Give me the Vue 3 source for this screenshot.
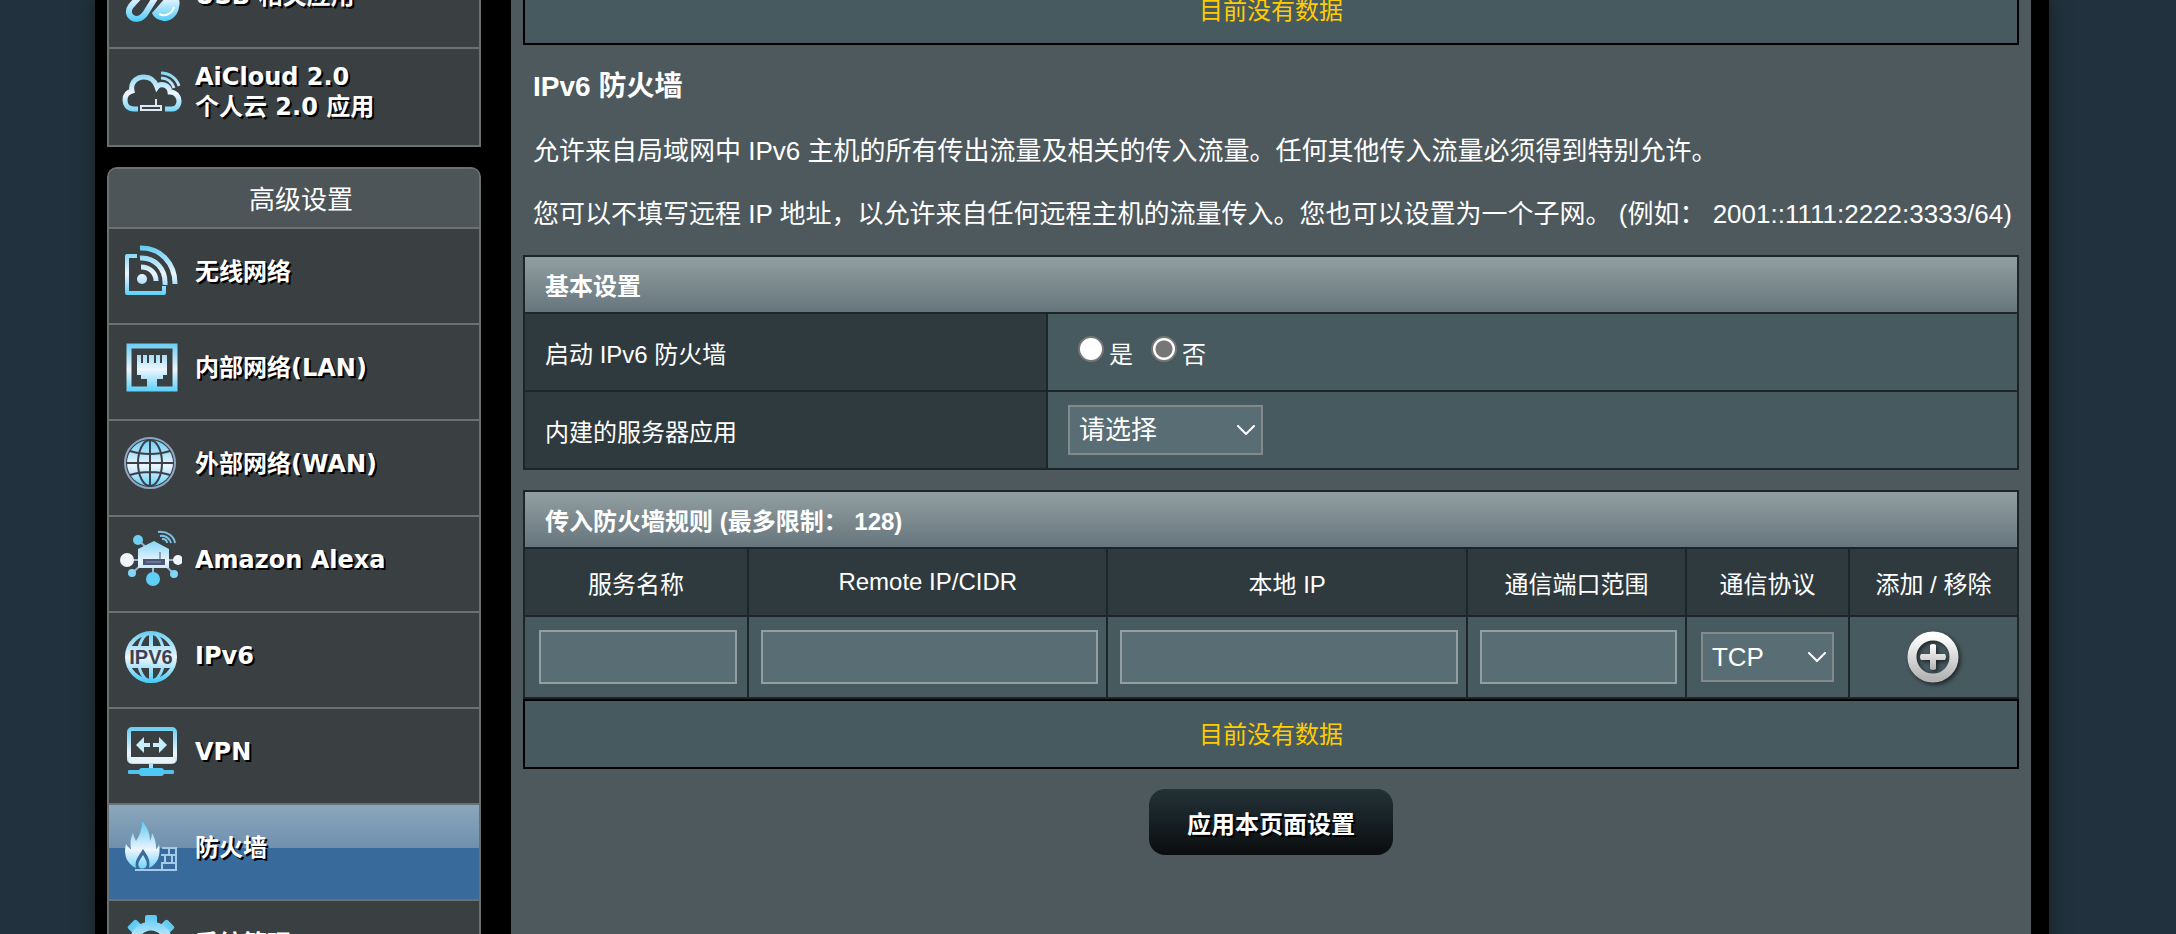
<script setup>
import { ref } from 'vue'

const generalItems = [
  { icon: 'usb', lines: ['USB 相关应用'] },
  { icon: 'cloud', lines: ['AiCloud 2.0', '个人云 2.0 应用'] },
]
const advancedItems = [
  { icon: 'wireless', lines: ['无线网络'] },
  { icon: 'lan', lines: ['内部网络(LAN)'] },
  { icon: 'wan', lines: ['外部网络(WAN)'] },
  { icon: 'alexa', lines: ['Amazon Alexa'] },
  { icon: 'ipv6', lines: ['IPv6'] },
  { icon: 'vpn', lines: ['VPN'] },
  { icon: 'firewall', lines: ['防火墙'], active: true },
  { icon: 'admin', lines: ['系统管理'] },
]
const groups = [
  { title: '', items: generalItems },
  { title: '高级设置', items: advancedItems },
]

const enabled = ref('no')
const service = ref('')
const protocol = ref('TCP')
const gearTeeth = [0, 45, 90, 135, 180, 225, 270, 315]
</script>

<template>
  <div class="page">
    <svg class="defs" aria-hidden="true">
      <defs>
        <linearGradient id="ice" gradientUnits="userSpaceOnUse" x1="0" y1="6" x2="0" y2="58">
          <stop offset="0" stop-color="#5ccaf2" />
          <stop offset="0.55" stop-color="#eef5fd" />
          <stop offset="1" stop-color="#4fcdf8" />
        </linearGradient>
        <linearGradient id="silver" x1="0" y1="0" x2="0" y2="1">
          <stop offset="0" stop-color="#ffffff" />
          <stop offset="1" stop-color="#b4b4b4" />
        </linearGradient>
      </defs>
    </svg>

    <div class="frame">
      <nav class="sidebar">
        <section v-for="group in groups" :key="group.title" class="group" :class="{ titled: group.title }">
          <h2 v-if="group.title" class="group-title">{{ group.title }}</h2>
          <a
            v-for="item in group.items"
            :key="item.icon"
            href="#"
            class="item"
            :class="{ active: item.active }"
          >
            <svg class="icon" viewBox="0 0 64 64" fill="none" stroke-linecap="butt" aria-hidden="true">
              <g v-if="item.icon === 'usb'" stroke="url(#ice)">
                <path d="M13 43 L30 24 C35 18 44 26 39 32 L27 51 C18 62 6 52 13 43 Z" stroke-width="6" />
                <path d="M34 50 L48 34 C55 28 64 34 61 44 C60 54 50 61 42 57 C38 56 35 53 34 50 Z" fill="url(#ice)" stroke="none" />
                <path d="M41 51 C47 54 54 51 56 44" stroke="#ffffff" stroke-width="2" />
              </g>
              <g v-else-if="item.icon === 'cloud'" stroke="url(#ice)">
                <path
                  d="M20 50 H16 C9 50 7 45 7 41 C7 36 10 33 14 32 C12 23 19 18 26 18 C33 18 37 22 39 28 C42 24 51 25 52 33 C58 33 61 38 61 42 C61 47 58 50 53 50 H47"
                  stroke-width="5"
                />
                <path d="M43 14 C52 14 59 20 61 27 M43 19 C49 19 54 23 56 29" stroke-width="3" />
                <path d="M22 47 H44 M22 51 H44 M23 46 V52 M43 46 V52 M38 40 V47" stroke="#dbe9f5" stroke-width="2" />
              </g>
              <g v-else-if="item.icon === 'wireless'" stroke="url(#ice)">
                <path d="M19 17 H9 V54 H46 V47" stroke-width="4" stroke-linejoin="round" />
                <path d="M22 9 C42 8 57 24 57 45 M22 19 C36 18 48 29 47 46 M23 28 C32 28 38 34 38 42" stroke-width="5" />
                <circle cx="24" cy="40" r="5" fill="url(#ice)" stroke="none" />
              </g>
              <g v-else-if="item.icon === 'lan'">
                <rect x="11" y="11" width="46" height="43" stroke="url(#ice)" stroke-width="5" />
                <path
                  d="M19 20 H23 V28 H25 V20 H29 V28 H31 V20 H36 V28 H38 V20 H42 V28 H44 V20 H49 V40 H45 V44 H39 V52 H29 V44 H23 V40 H19 Z"
                  fill="url(#ice)"
                />
              </g>
              <g v-else-if="item.icon === 'wan'">
                <circle cx="32" cy="32" r="25" stroke="#8fa5c4" stroke-width="2" />
                <circle cx="32" cy="32" r="23" fill="url(#ice)" />
                <g stroke="#3a4049" stroke-width="2">
                  <ellipse cx="32" cy="32" rx="12" ry="23" />
                  <path d="M32 9 V55 M9 32 H55 M12 20 C24 24 40 24 52 20 M12 44 C24 40 40 40 52 44" />
                </g>
              </g>
              <g v-else-if="item.icon === 'alexa'">
                <path d="M9 33 H60 M22 39 L14 46 M48 39 L56 47 M35 40 V52 M20 13 L30 22" stroke="#9fb1cc" stroke-width="2" />
                <path d="M20 22 L36 14 L51 22 V41 H20 Z" fill="url(#ice)" />
                <rect x="25" y="32" width="22" height="6" fill="#4b5674" />
                <path d="M42 25 V33" stroke="#4b5674" stroke-width="1" />
                <path d="M28 35 H43" stroke="#8796b4" stroke-width="1" />
                <path d="M40 5 C49 4 56 9 57 16 M42 9 C48 8 52 12 53 16 M44 12 C48 12 49 14 49 16" stroke="#7ec3e4" stroke-width="2" />
                <circle cx="20" cy="13" r="5" fill="#6fcff3" />
                <circle cx="9" cy="33" r="7" fill="#f1f4fb" />
                <circle cx="60" cy="33" r="5" fill="#f1f4fb" />
                <circle cx="14" cy="46" r="4" fill="#7fd6f6" />
                <circle cx="35" cy="52" r="7" fill="#5fcff7" />
                <circle cx="56" cy="47" r="4" fill="#7fd6f6" />
              </g>
              <g v-else-if="item.icon === 'ipv6'">
                <g stroke="url(#ice)" stroke-width="4">
                  <circle cx="33" cy="34" r="24" />
                  <ellipse cx="33" cy="34" rx="13" ry="24" stroke-width="3" />
                  <path d="M33 10 V58" />
                </g>
                <path d="M12 23 H54 Q61 34 54 45 H12 Q5 34 12 23 Z" fill="url(#ice)" />
                <text x="33" y="41" class="icon-text" text-anchor="middle">IPV6</text>
              </g>
              <g v-else-if="item.icon === 'vpn'">
                <rect x="11" y="10" width="46" height="33" rx="3" stroke="url(#ice)" stroke-width="4" />
                <path d="M11 41 H57" stroke="#e6f3fb" stroke-width="6" />
                <path
                  d="M18 26 L26 18 V24 H32 V28 H26 V34 Z M49 26 L41 18 V24 H35 V28 H41 V34 Z"
                  fill="#c9eefb"
                />
                <path d="M33 44 V52" stroke="#a5e4fa" stroke-width="4" />
                <rect x="10" y="51" width="46" height="4" rx="1" fill="#4fc3ee" />
                <rect x="21" y="49" width="25" height="8" rx="3" fill="#4fc8f4" />
              </g>
              <g v-else-if="item.icon === 'firewall'">
                <path d="M17 55 H58 V33 H44 M43 40 H58 M43 48 H58 M51 33 V40 M47 40 V48 M54 40 V48 M44 48 V55" stroke="#a3cbe9" stroke-width="2" />
                <path
                  d="M18 53 C9 49 5 40 8 29 C10 32 11 33 13 34 C12 27 13 22 15 18 C16 22 17 24 18 26 C22 20 24 14 24 6 C30 13 32 20 32 26 C33 24 34 21 34 18 C38 25 38 30 38 34 C40 32 41 31 41 29 C43 40 40 49 31 53 C33 45 29 40 25 34 C21 41 16 45 18 53 Z"
                  fill="url(#ice)"
                />
                <path d="M25 40 C28 45 30 48 28 52 C26 54 22 54 21 52 C19 48 22 45 25 40 Z" fill="url(#ice)" />
              </g>
              <g v-else>
                <rect
                  v-for="angle in gearTeeth"
                  :key="angle"
                  x="27"
                  y="4"
                  width="12"
                  height="12"
                  rx="2"
                  fill="url(#ice)"
                  :transform="`rotate(${angle} 33 32)`"
                />
                <circle cx="33" cy="32" r="17" stroke="url(#ice)" stroke-width="9" />
              </g>
            </svg>
            <span class="item-label">
              <span v-for="line in item.lines" :key="line" class="item-line">{{ line }}</span>
            </span>
          </a>
        </section>
      </nav>

      <main class="content">
        <div class="empty empty-top">目前没有数据</div>

        <div class="intro">
          <h1>IPv6 防火墙</h1>
          <p>允许来自局域网中 IPv6 主机的所有传出流量及相关的传入流量。任何其他传入流量必须得到特别允许。</p>
          <p>您可以不填写远程 IP 地址，以允许来自任何远程主机的流量传入。您也可以设置为一个子网。 (例如： 2001::1111:2222:3333/64)</p>
        </div>

        <table class="table settings">
          <colgroup>
            <col class="col-name" />
            <col />
          </colgroup>
          <thead>
            <tr><th colspan="2" class="caption">基本设置</th></tr>
          </thead>
          <tbody>
            <tr>
              <th scope="row">启动 IPv6 防火墙</th>
              <td>
                <div class="radios">
                  <label><input v-model="enabled" type="radio" name="enabled" value="yes" />是</label>
                  <label><input v-model="enabled" type="radio" name="enabled" value="no" />否</label>
                </div>
              </td>
            </tr>
            <tr>
              <th scope="row"><label for="service">内建的服务器应用</label></th>
              <td>
                <div class="select service">
                  <select id="service" v-model="service">
                    <option value="">请选择</option>
                  </select>
                  <svg class="chevron" viewBox="0 0 18 10" aria-hidden="true"><path d="M1 1 L9 9 L17 1" /></svg>
                </div>
              </td>
            </tr>
          </tbody>
        </table>

        <table class="table rules">
          <colgroup>
            <col class="col-service" />
            <col />
            <col />
            <col class="col-port" />
            <col class="col-protocol" />
            <col class="col-action" />
          </colgroup>
          <thead>
            <tr><th colspan="6" class="caption">传入防火墙规则 (最多限制： 128)</th></tr>
            <tr class="heads">
              <th scope="col">服务名称</th>
              <th scope="col">Remote IP/CIDR</th>
              <th scope="col">本地 IP</th>
              <th scope="col">通信端口范围</th>
              <th scope="col">通信协议</th>
              <th scope="col">添加 / 移除</th>
            </tr>
          </thead>
          <tbody>
            <tr class="entry">
              <td class="first"><input type="text" aria-label="服务名称" /></td>
              <td><input type="text" aria-label="Remote IP/CIDR" /></td>
              <td><input type="text" aria-label="本地 IP" /></td>
              <td><input type="text" aria-label="通信端口范围" /></td>
              <td class="protocol-cell">
                <div class="select">
                  <select v-model="protocol" aria-label="通信协议">
                    <option>TCP</option>
                    <option>UDP</option>
                  </select>
                  <svg class="chevron" viewBox="0 0 18 10" aria-hidden="true"><path d="M1 1 L9 9 L17 1" /></svg>
                </div>
              </td>
              <td class="action-cell">
                <button type="button" class="add" aria-label="添加">
                  <svg viewBox="0 0 52 52" aria-hidden="true">
                    <circle cx="26" cy="26" r="21" fill="none" stroke="url(#silver)" stroke-width="9" />
                    <path
                      d="M23 14 Q26 12 29 14 V23 H38 Q40 26 38 29 H29 V38 Q26 40 23 38 V29 H14 Q12 26 14 23 H23 Z"
                      fill="url(#silver)"
                    />
                  </svg>
                </button>
              </td>
            </tr>
          </tbody>
        </table>
        <div class="empty">目前没有数据</div>

        <button type="button" class="apply">应用本页面设置</button>
      </main>
    </div>
  </div>
</template>

<style>
body {
  margin: 0;
  background: #21323e;
}
</style>

<style scoped>
.page {
  box-sizing: border-box;
  height: 100vh;
  overflow: hidden;
  padding: 0 127px 0 95px;
  background: #21323e;
  color: #fff;
  font-family: "Liberation Sans", Arial, "Noto Sans CJK SC", sans-serif;
  font-size: 24px;
}
.defs {
  position: absolute;
  width: 0;
  height: 0;
}
.frame {
  box-sizing: border-box;
  display: flex;
  align-items: flex-start;
  gap: 30px;
  min-height: 100%;
  padding: 0 18px 0 12px;
  background: #000;
  box-shadow: 0 0 16px 2px #1a2323;
}

/* Sidebar */
.sidebar {
  flex: 0 0 374px;
  margin-top: -49px;
  font-family: "DejaVu Sans", Verdana, "Noto Sans CJK SC", sans-serif;
}
.group {
  border: 2px solid #6b7071;
  background: #3a3f41;
}
.group + .group {
  margin-top: 20px;
}
.titled {
  border-radius: 10px 10px 0 0;
  overflow: hidden;
}
.group-title {
  margin: 0;
  padding: 4px 0 0 14px;
  border-bottom: 2px solid #6b7071;
  background: #4d5558;
  font-size: 26px;
  font-weight: 400;
  line-height: 54px;
  text-align: center;
}
.item {
  box-sizing: border-box;
  display: flex;
  height: 96px;
  padding: 10px 0 0 9px;
  gap: 13px;
  border-bottom: 2px solid #6b7071;
  color: #fff;
  font-weight: 700;
  line-height: 30px;
  text-decoration: none;
  text-shadow: 2px 2px 0 #000;
}
.item:last-child {
  border-bottom: 0;
}
.item.active {
  background: linear-gradient(#8ba6bd 0, #6f90ae 46%, #386a9b 46%, #386a9b 100%);
}
.icon {
  flex: none;
  width: 64px;
  height: 64px;
}
.icon-text {
  fill: #3a4354;
  font: 700 20px "Liberation Sans", Arial, sans-serif;
  text-shadow: none;
}
.item-label {
  display: flex;
  flex-direction: column;
  justify-content: center;
  height: 66px;
}
.item-line {
  white-space: nowrap;
}

/* Content */
.content {
  flex: 1;
  min-width: 0;
  height: 100vh;
  box-sizing: border-box;
  padding: 0 12px;
  background: #4d595d;
}
.empty {
  box-sizing: border-box;
  height: 70px;
  border: 2px solid #000;
  background: #475a5f;
  color: #fc0;
  line-height: 68px;
  text-align: center;
}
.empty-top {
  margin-top: -25px;
}
.intro {
  padding: 26px 0 25px 10px;
}
.intro h1 {
  margin: 0 0 32px;
  font-size: 28px;
  line-height: 32px;
}
.intro p {
  margin: 0 0 31px;
  font-size: 26px;
  line-height: 32px;
  white-space: nowrap;
}
.intro p:last-child {
  margin-bottom: 0;
}
.table {
  width: 100%;
  table-layout: fixed;
  border-collapse: collapse;
}
.table th,
.table td {
  box-sizing: border-box;
  padding: 0 0 0 20px;
  border: 2px solid #1c2528;
}
.table th {
  background: #2f3a3e;
  font-weight: 400;
  text-align: left;
}
.table td {
  background: #475a5f;
}
.table .caption {
  height: 57px;
  background: linear-gradient(#919ea1, #67767d);
  font-weight: 700;
}
.settings {
  margin-bottom: 20px;
}
.settings tbody tr {
  height: 78px;
}
.col-name {
  width: 523px;
}
.col-service {
  width: 224px;
}
.col-port {
  width: 219px;
}
.col-protocol {
  width: 163px;
}
.col-action {
  width: 169px;
}
.radios {
  display: flex;
  gap: 18px;
  padding-left: 10px;
}
.radios label {
  display: flex;
  align-items: center;
  gap: 5px;
}
.radios input {
  box-sizing: border-box;
  width: 26px;
  height: 26px;
  margin: 0 0 6px;
  appearance: none;
  border: 2px solid #767676;
  border-radius: 50%;
  background: #fff;
}
.radios input:checked {
  background: radial-gradient(circle, #767676 8px, #fff 9px);
}
.select {
  display: grid;
  align-items: center;
}
.select > * {
  grid-area: 1 / 1;
}
.service {
  width: 195px;
}
select {
  box-sizing: border-box;
  width: 100%;
  height: 50px;
  padding: 0 32px 0 9px;
  appearance: none;
  border: 2px solid #84898c;
  border-radius: 0;
  background: #586e74;
  color: #fff;
  font: inherit;
  font-size: 26px;
}
.chevron {
  justify-self: end;
  width: 18px;
  height: 10px;
  margin-right: 8px;
  fill: none;
  stroke: #fff;
  stroke-width: 2;
  stroke-linecap: round;
  pointer-events: none;
}
.table .heads th {
  height: 68px;
  padding: 0;
  text-align: center;
}
.table .entry td {
  height: 82px;
  padding: 0 8px 0 12px;
}
.table .entry .first {
  padding: 0 10px 0 14px;
}
.table .entry .protocol-cell {
  padding: 0 14px;
}
.table .entry .action-cell {
  padding: 0;
}
.entry input {
  box-sizing: border-box;
  display: block;
  width: 100%;
  height: 54px;
  padding: 0 8px;
  border: 2px solid #929ea1;
  background: #596d74;
  color: #fff;
  font: inherit;
}
.add {
  display: block;
  width: 52px;
  height: 52px;
  margin: 0 auto;
  padding: 0;
  border: 0;
  background: none;
}
.add svg {
  display: block;
  filter: drop-shadow(2px 2px 2px rgba(0, 0, 0, 0.6));
}
.apply {
  display: block;
  min-width: 244px;
  height: 66px;
  margin: 20px auto 0;
  padding: 0 36px;
  border: 0;
  border-radius: 16px;
  background: linear-gradient(#233238, #0b0d0e);
  color: #fff;
  font: inherit;
  font-weight: 700;
  text-shadow: 2px 2px 0 #000;
}
</style>
